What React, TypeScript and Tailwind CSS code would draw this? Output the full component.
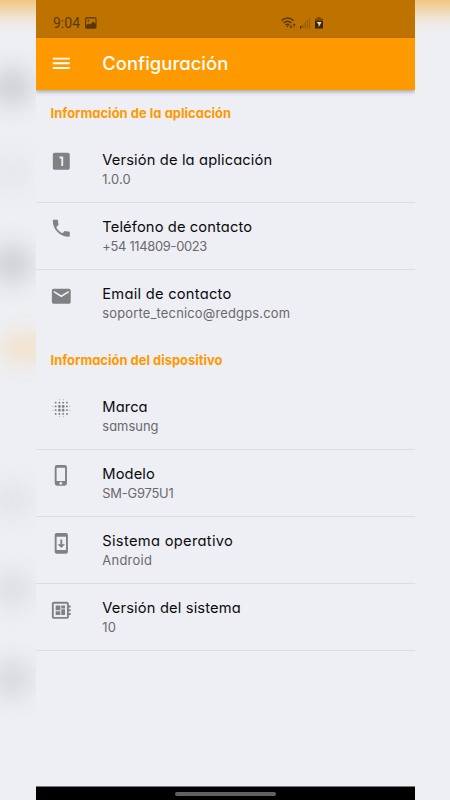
import React from 'react';
import { IconType } from 'react-icons';
import {
  MdBlurOn,
  MdDeveloperBoard,
  MdEmail,
  MdLooksOne,
  MdMenu,
  MdPhone,
  MdPhoneIphone,
  MdSystemUpdate
} from 'react-icons/md';

interface SettingItem {
  icon: IconType;
  title: string;
  value: string;
  titleClass: string;
  valueClass: string;
}

interface SettingSection {
  heading: string;
  headingClass: string;
  items: SettingItem[];
}

const sections: SettingSection[] = [
  {
    heading: 'Información de la aplicación',
    headingClass: 'h-[46.3px] tracking-[0.05px]',
    items: [
      { icon: MdLooksOne, title: 'Versión de la aplicación', value: '1.0.0', titleClass: 'tracking-[0.14px]', valueClass: 'tracking-[0.1px]' },
      { icon: MdPhone, title: 'Teléfono de contacto', value: '+54 114809-0023', titleClass: 'tracking-[0.12px]', valueClass: 'tracking-[-0.3px]' },
      { icon: MdEmail, title: 'Email de contacto', value: 'soporte_tecnico@redgps.com', titleClass: 'tracking-[0.25px]', valueClass: 'tracking-[0.2px]' }
    ]
  },
  {
    heading: 'Información del dispositivo',
    headingClass: 'h-[45.3px] tracking-[0.03px]',
    items: [
      { icon: MdBlurOn, title: 'Marca', value: 'samsung', titleClass: 'tracking-[0.1px]', valueClass: 'tracking-[0.05px]' },
      { icon: MdPhoneIphone, title: 'Modelo', value: 'SM-G975U1', titleClass: 'tracking-[0.1px]', valueClass: 'tracking-[-0.2px]' },
      { icon: MdSystemUpdate, title: 'Sistema operativo', value: 'Android', titleClass: 'tracking-[0.3px]', valueClass: 'tracking-[0.3px]' },
      { icon: MdDeveloperBoard, title: 'Versión del sistema', value: '10', titleClass: 'tracking-[0.15px]', valueClass: 'tracking-[0.2px]' }
    ]
  }
];

// Soft, out-of-focus backdrop on both sides of the phone screen
const Backdrop: React.FC = () => (
  <div className="absolute inset-0 overflow-hidden">
    <div className="absolute -top-8 -left-8 h-10 w-[520px] bg-[#f3b859] blur-[12px]" />
    <div className="absolute top-[69px] -left-2 h-9 w-10 rounded-full bg-[#cbccd0] blur-[12px]" />
    <div className="absolute top-[157px] -left-2 h-8 w-10 rounded-full bg-[#e5e6ea] blur-[12px]" />
    <div className="absolute top-[246px] -left-2 h-9 w-10 rounded-full bg-[#cbccd0] blur-[12px]" />
    <div className="absolute top-[334px] left-1 h-7 w-16 bg-[#f2e2cc] blur-[10px]" />
    <div className="absolute top-[484px] -left-2 h-8 w-10 rounded-full bg-[#e1e2e5] blur-[12px]" />
    <div className="absolute top-[573px] -left-2 h-8 w-10 rounded-full bg-[#dbdcdf] blur-[12px]" />
    <div className="absolute top-[661px] -left-2 h-9 w-10 rounded-full bg-[#d5d6d9] blur-[12px]" />
  </div>
);

const PictureIcon: React.FC = () => (
  <svg className="ml-1" width="13" height="12" viewBox="0 0 13 12" fill="#5a3806">
    <rect x="1.6" y=".9" width="10.4" height="10.2" rx="1" fill="none" stroke="#5a3806" strokeWidth="1.1" />
    <path d="M1.6 8.6l2.8-2.2L6.2 7.6l3-3.1L12 7.3v3.8H1.6z" />
    <circle cx="4.4" cy="3.7" r=".9" />
  </svg>
);

const WifiIcon: React.FC = () => (
  <svg width="15" height="12" viewBox="0 0 15 12" fill="none" stroke="#5a3806" strokeWidth="1.4">
    <path d="M.6 3.6Q6.5-1.6 12.6 3.6M2.6 6Q6.5 2.6 10.5 6M4.5 8Q6.5 6.3 8.5 8" />
    <path d="M5.4 8.8h2.2L6.5 10.2z" fill="#492d04" stroke="none" />
    <path d="M10 8v3M13.2 10.2V7M9 9.7l1 1.2 1-1.2M12.2 8l1-1.2 1 1.2" strokeWidth="1" />
  </svg>
);

const SignalIcon: React.FC = () => (
  <svg width="11" height="12" viewBox="0 0 11 12" fill="#9a6106">
    <path d="M0 9h1.4v2.5H0z" fill="#492d04" />
    <path d="M2.2 7.5h1.4v4H2.2zM4.4 5.2h1.4v6.3H4.4zM6.6 3h1.4v8.5H6.6zM8.8 1h1.4v10.5H8.8z" />
  </svg>
);

const BatteryIcon: React.FC = () => (
  <svg width="8" height="12" viewBox="0 0 8 12">
    <path d="M2.3 0h3.4v1.4H8v4H0v-4h2.3z" fill="#7b4c05" />
    <path d="M0 4h8v7.5H0z" fill="#3c2404" />
    <path d="M1.6 5.1h4.9L5 8.1 3.3 10.2l.4-2.6z" fill="#f3d7ad" />
  </svg>
);

const StatusBar: React.FC = () => (
  <div className="flex h-[38px] items-center bg-[#be7300] pt-2 pl-[17px] text-[#5a3806]">
    <span className="w-[27px] font-['Roboto',sans-serif] text-[14px] leading-none">9:04</span>
    <PictureIcon />
    <div className="ml-[184px] flex items-center gap-1">
      <WifiIcon />
      <SignalIcon />
      <BatteryIcon />
    </div>
  </div>
);

const SettingRow: React.FC<{ item: SettingItem; divider: boolean }> = ({ item, divider }) => {
  const Icon = item.icon;
  return (
    <li className={divider ? 'flex h-[67.2px] border-b border-[#dcdde1] pl-[14px]' : 'flex h-[67.2px] pl-[14px]'}>
      <Icon className="mt-[14.5px] size-[22.6px] shrink-0 text-[#808183]" />
      <div className="ml-[29.7px] pt-[15px] whitespace-nowrap">
        <div className={`text-[14.7px] leading-[19px] text-[#0b0b0c] ${item.titleClass}`}>{item.title}</div>
        <div className={`text-[12.9px] leading-[19px] text-[#69696b] ${item.valueClass}`}>{item.value}</div>
      </div>
    </li>
  );
};

export default function App() {
  return (
    <div className="relative h-[800px] w-[450px] overflow-hidden bg-[#eeeff3] font-['Inter',sans-serif] [font-feature-settings:'cv11']">
      <Backdrop />
      <div className="relative ml-9 flex h-full w-[379px] flex-col overflow-hidden bg-[#eeeff4]">
        <StatusBar />
        <header className="relative flex h-[51.5px] items-center bg-[#ff9900] pl-[14px] text-white shadow-[0_2px_4px_rgba(0,0,0,0.3)]">
          <MdMenu className="size-[22.6px]" />
          <h1 className="ml-[29.7px] pt-px text-[18.4px] font-medium tracking-[0.05px]">Configuración</h1>
        </header>
        <main className="grow">
          {sections.map((section) => (
            <section key={section.heading}>
              <h2 className={`pt-[14px] pl-[14.5px] text-[12.9px] leading-[19px] font-bold text-[#ff9900] ${section.headingClass}`}>
                {section.heading}
              </h2>
              <ul>
                {section.items.map((item) => (
                  <SettingRow key={item.title} item={item} divider={item.icon !== MdEmail} />
                ))}
              </ul>
            </section>
          ))}
        </main>
        <div className="flex h-[14px] justify-center border-t border-[#77787a] bg-black pt-[5px]">
          <div className="h-1 w-[101px] rounded-full bg-[#616161]" />
        </div>
      </div>
    </div>
  );
}
